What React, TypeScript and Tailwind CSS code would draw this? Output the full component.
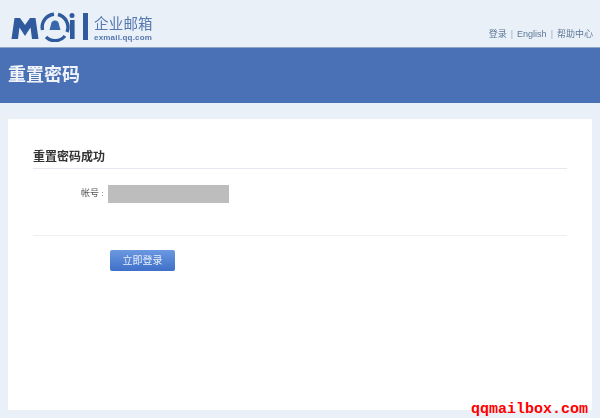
export default function App() {
  return (
    <div className="relative w-[600px] h-[418px] overflow-hidden bg-[#e9f0f8] font-['Liberation_Sans','Noto_Sans_CJK_SC',sans-serif]">
      <header className="h-[48px] flex items-start justify-between pl-[11px] pr-[7px] border-b border-[#8fa6c8]">
        <div className="flex items-start pt-[12px] gap-[5px]">
          <svg width="78" height="30" viewBox="0 0 78 30" className="blur-[0.6px]">
            <path d="M0.5 27 L3.5 6 H9 L14 13 L19 6 H24.5 L27.5 27 H21 L19.5 15.5 L14 24 L8.5 15.5 L7 27 Z" fill="#2f5a9e" />
            <g fill="none" stroke="#2f5a9e" strokeWidth="3.4">
              <path d="M31.5 18 A13 13 0 0 1 43 2.2" />
              <path d="M47 2.5 A13 13 0 0 1 56 20" />
              <path d="M54 24 A13 13 0 0 1 35 25" />
            </g>
            <path d="M44 8.5 C46.5 8.5 48 10.5 48 12.5 L49.5 18 H38.5 L40 12.5 C40 10.5 41.5 8.5 44 8.5 Z" fill="#3a66ab" />
            <circle cx="61" cy="3.5" r="2.5" fill="#2f5a9e" />
            <rect x="59" y="8" width="4.6" height="19" fill="#2f5a9e" />
            <rect x="72" y="1" width="5" height="27" fill="#2f5a9e" />
          </svg>
          <div className="flex flex-col pt-[4px] text-[#5578b0]">
            <span className="text-[14.5px] leading-[16px] w-[60px] tracking-[0.2px] blur-[0.5px]">企业邮箱</span>
            <span className="text-[8px] leading-[9px] mt-[1px] font-bold tracking-[0.2px] blur-[0.4px]">exmail.qq.com</span>
          </div>
        </div>
        <nav className="flex items-center gap-[4px] pt-[28px] text-[9px] leading-[12px] text-[#5f7896] blur-[0.4px]">
          <span>登录</span>
          <span className="text-[#9db0c8]">|</span>
          <span>English</span>
          <span className="text-[#9db0c8]">|</span>
          <span>帮助中心</span>
        </nav>
      </header>

      <div className="h-[55px] bg-[#4a71b5] flex items-center pl-[8px]">
        <h1 className="text-[18px] font-bold text-[#f0f4fa] blur-[0.5px]">重置密码</h1>
      </div>

      <main className="mx-[8px] mt-[16px] h-[291px] bg-white pl-[25px] pr-[25px] pt-[30px]">
        <div className="border-b border-[#e6e8f0] h-[20px]">
          <h2 className="text-[12px] leading-[17px] font-bold text-[#333] blur-[0.4px]">重置密码成功</h2>
        </div>
        <div className="flex items-center mt-[15px] h-[19px]">
          <span className="w-[75px] pl-[48px] whitespace-nowrap text-[8px] text-[#555] blur-[0.4px]">
            <span className="text-[9px]">帐号</span> :
          </span>
          <div className="w-[121px] h-[18px] bg-[#bdbdbd]" />
        </div>
        <div className="mt-[32px] border-b border-[#f0f0f2]" />
        <button className="block ml-[77px] mt-[14px] w-[65px] h-[21px] rounded-[2px] bg-gradient-to-b from-[#6b98e0] to-[#3f70c8] text-[10px] text-[#e8effa] blur-[0.4px]">
          立即登录
        </button>
      </main>

      <div className="absolute left-[471px] top-[402px] text-[15px] leading-[15px] font-bold text-[#ff0000] font-['Liberation_Mono',monospace]">
        qqmailbox.com
      </div>
    </div>
  );
}
